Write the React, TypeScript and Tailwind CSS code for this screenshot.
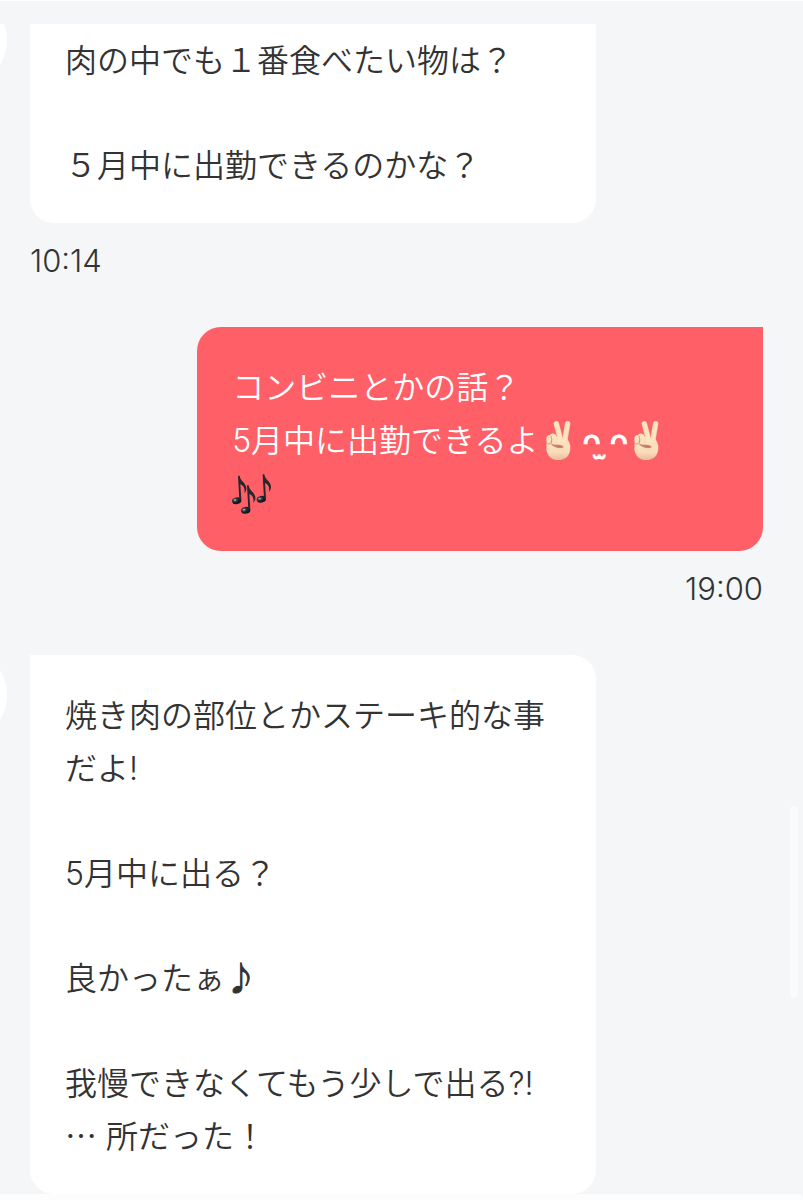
import type { ReactNode } from 'react'

type Message = {
  id: number
  from: 'guest' | 'me'
  time?: string
  // each paragraph is a list of lines
  paragraphs: ReactNode[][]
}

function PeaceHand() {
  return (
    <svg
      role="img"
      aria-label="ピース"
      viewBox="-22 0 120 120"
      className="mb-1 inline-block h-10 w-10 align-middle"
    >
      <defs>
        <linearGradient id="skin" x1="0" y1="0" x2="0" y2="1">
          <stop offset="0" stopColor="#fde3c0" />
          <stop offset="0.7" stopColor="#fadcbc" />
          <stop offset="1" stopColor="#e9bd96" />
        </linearGradient>
      </defs>
      <g strokeLinecap="round" fill="none">
        <path d="M33 8 L47 60" stroke="#e3b58c" strokeWidth="17" />
        <path d="M67 8 L58 60" stroke="#e3b58c" strokeWidth="17" />
      </g>
      <path
        d="M4 62 C1 50 5 42 13 43 C18 36 29 35 33 44 L40 53 L66 54 C76 68 78 83 71 99 C65 112 50 118 35 117 C17 116 5 103 3 84 Z"
        fill="url(#skin)"
      />
      <g strokeLinecap="round" fill="none" stroke="#fde3c0" strokeWidth="14">
        <path d="M33 8 L47 60" />
        <path d="M67 8 L58 60" />
      </g>
      <g fill="none" stroke="#cf9670" strokeWidth="3" strokeLinecap="round">
        <path d="M17 46 C20 52 20 58 18 64" />
        <path d="M3 66 C8 71 15 70 18 64" />
      </g>
      <path
        d="M19 70 C28 76 44 68 54 78 C46 82 30 81 19 70"
        fill="#c07c5c"
        stroke="#b9765a"
        strokeWidth="2"
        strokeLinecap="round"
      />
    </svg>
  )
}

// one quaver, its head centred on 0,0
function Note({ x, y }: { x: number; y: number }) {
  return (
    <g transform={`translate(${x} ${y})`}>
      <ellipse rx="14" ry="10" transform="rotate(-12)" fill="url(#noteHead)" />
      <path
        d="M8 -2 L4 -75 L9 -75 C11 -58 27 -55 29 -39 C30 -31 26 -26 23 -23 C26 -37 20 -45 11 -49 L14 -2 Z"
        fill="#24282d"
      />
      <ellipse cx="-5" cy="-2" rx="4" ry="2" fill="#a9b4ba" />
    </g>
  )
}

function MusicNotes() {
  return (
    <svg
      role="img"
      aria-label="音符"
      viewBox="0 0 120 120"
      className="mb-1 inline-block h-10 w-10 align-middle"
    >
      <defs>
        <radialGradient id="noteHead" cx="0.35" cy="0.35" r="0.8">
          <stop offset="0" stopColor="#59646b" />
          <stop offset="0.5" stopColor="#1b1f23" />
          <stop offset="1" stopColor="#0b0d0f" />
        </radialGradient>
      </defs>
      <Note x={14} y={80} />
      <Note x={41} y={109} />
      <Note x={88} y={76} />
    </svg>
  )
}

// thin space, combining mouth, hair space between the two eyes
function Face() {
  return (
    <span className="inline-block w-12 pl-1 text-center font-['DejaVu_Sans',sans-serif] text-[30px] leading-none font-normal whitespace-pre [-webkit-text-stroke:1px_white]">
      {'ᴖ\u2009\u032b\u200aᴖ'}
    </span>
  )
}

const messages: Message[] = [
  {
    id: 1,
    from: 'guest',
    time: '10:14',
    paragraphs: [['肉の中でも１番食べたい物は？'], ['５月中に出勤できるのかな？']],
  },
  {
    id: 2,
    from: 'me',
    time: '19:00',
    paragraphs: [
      [
        'コンビニとかの話？',
        <>
          5月中に出勤できるよ
          <PeaceHand />
          <Face />
          <PeaceHand />
        </>,
        <MusicNotes />,
      ],
    ],
  },
  {
    id: 3,
    from: 'guest',
    paragraphs: [
      ['焼き肉の部位とかステーキ的な事', 'だよ!'],
      ['5月中に出る？'],
      [
        <>
          良かったぁ
          <span className="leading-none [-webkit-text-stroke:1px_#333333]">♪</span>
        </>,
      ],
      [
        '我慢できなくてもう少しで出る?!',
        <>
          <span className="font-['Noto_Sans_CJK_JP',sans-serif] leading-none">…</span> 所だった！
        </>,
      ],
    ],
  },
]

function Bubble({ message }: { message: Message }) {
  const mine = message.from === 'me'

  return (
    <li className={`relative flex flex-col ${mine ? 'items-end' : 'items-start'}`}>
      {!mine && (
        <span className="absolute -top-2 -left-[119px] size-24 rounded-full bg-white" />
      )}
      <div
        className={`flex w-[77.2%] flex-col gap-[52px] px-[35px] pt-[34px] pb-[31px] text-[32px] leading-[53px] ${
          mine
            ? 'rounded-3xl rounded-tr-none bg-[#ff5f66] text-white'
            : 'rounded-3xl rounded-tl-none bg-white text-[#333333]'
        }`}
      >
        {message.paragraphs.map((lines, i) => (
          <div key={i}>
            {lines.map((line, j) => (
              <p key={j} className="h-[53px] whitespace-nowrap">
                {line}
              </p>
            ))}
          </div>
        ))}
      </div>
      {message.time && (
        <time className="mt-5 mb-12 text-[31px] leading-9 font-light text-[#333333]">
          {message.time}
        </time>
      )}
    </li>
  )
}

function App() {
  return (
    <div
      lang="ja"
      className="relative flex min-h-screen flex-col overflow-hidden bg-[#f5f6f8] font-['Inter','Noto_Sans_CJK_JP',sans-serif] font-[350]"
    >
      {/* Header covers the top of the scrolled list */}
      <header className="z-10 h-6 border-t border-white bg-[#f5f6f8]" />

      <main className="-mt-6 flex-1 pr-10 pl-[30px]">
        <ul>
          {messages.map((message) => (
            <Bubble key={message.id} message={message} />
          ))}
        </ul>
      </main>

      {/* Scroll thumb */}
      <div className="absolute top-[806px] right-[5px] h-48 w-2 rounded-full bg-[#fafbfc]" />

      <footer className="h-1.5 rounded-tr-3xl bg-[#fdfdfd]" />
    </div>
  )
}

export default App
